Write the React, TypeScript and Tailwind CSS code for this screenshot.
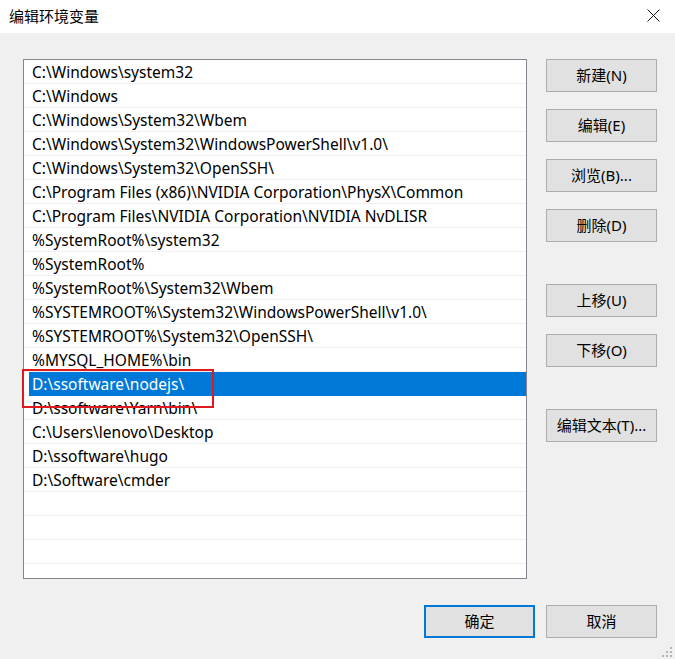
const paths = [
  'C:\\Windows\\system32',
  'C:\\Windows',
  'C:\\Windows\\System32\\Wbem',
  'C:\\Windows\\System32\\WindowsPowerShell\\v1.0\\',
  'C:\\Windows\\System32\\OpenSSH\\',
  'C:\\Program Files (x86)\\NVIDIA Corporation\\PhysX\\Common',
  'C:\\Program Files\\NVIDIA Corporation\\NVIDIA NvDLISR',
  '%SystemRoot%\\system32',
  '%SystemRoot%',
  '%SystemRoot%\\System32\\Wbem',
  '%SYSTEMROOT%\\System32\\WindowsPowerShell\\v1.0\\',
  '%SYSTEMROOT%\\System32\\OpenSSH\\',
  '%MYSQL_HOME%\\bin',
  'D:\\ssoftware\\nodejs\\',
  'D:\\ssoftware\\Yarn\\bin\\',
  'C:\\Users\\lenovo\\Desktop',
  'D:\\ssoftware\\hugo',
  'D:\\Software\\cmder',
  '',
  '',
  '',
  '',
]

const SELECTED = 13

function Button({
  children,
  primary,
}: {
  children: React.ReactNode
  primary?: boolean
}) {
  return (
    <button
      className={
        primary
          ? 'flex h-[33px] w-[111px] items-center justify-center border-2 border-[#0078d7] bg-[#e1e1e1] text-[15px] text-black'
          : 'flex h-[33px] w-[111px] items-center justify-center border border-[#adadad] bg-[#e1e1e1] text-[15px] text-black'
      }
    >
      {children}
    </button>
  )
}

function ResizeGrip() {
  return (
    <svg width="10" height="10" viewBox="0 0 10 10" className="absolute bottom-[2px] right-[3px]">
      <rect x="8" y="0" width="2" height="2" fill="#b5b5b5" />
      <rect x="4" y="4" width="2" height="2" fill="#b5b5b5" />
      <rect x="8" y="4" width="2" height="2" fill="#b5b5b5" />
      <rect x="0" y="8" width="2" height="2" fill="#b5b5b5" />
      <rect x="4" y="8" width="2" height="2" fill="#b5b5b5" />
      <rect x="8" y="8" width="2" height="2" fill="#b5b5b5" />
    </svg>
  )
}

export default function App() {
  return (
    <div
      className="relative flex h-[659px] w-[675px] flex-col overflow-hidden bg-[#f0f0f0] text-black"
      style={{ fontFamily: '"Noto Sans", "Noto Sans CJK SC", sans-serif' }}
    >
      <div className="flex h-[33px] shrink-0 items-center justify-between bg-white pl-[9px] pr-[15px]">
        <span className="text-[15px] leading-none">编辑环境变量</span>
        <svg width="13" height="13" viewBox="0 0 13 13" className="mt-[-3px]">
          <path d="M0.5 0.5 L12.5 12.5 M12.5 0.5 L0.5 12.5" stroke="#111" strokeWidth="1" />
        </svg>
      </div>

      <div className="flex pt-[26px]">
        <div className="relative ml-[23px] h-[520px] w-[504px] overflow-hidden border border-[#828790] bg-white">
          {paths.map((p, i) => (
            <div
              key={i}
              className="relative h-[24px] border-b border-[#f0f0f0]"
            >
              <div
                className={
                  i === SELECTED
                    ? 'ml-[5px] flex h-[24px] items-center bg-[#0078d7] pl-[3px] pt-[2px] text-[15.5px] text-white'
                    : 'ml-[5px] flex h-[23px] items-center pl-[3px] pt-[2px] text-[15.5px]'
                }
              >
                {p}
              </div>
            </div>
          ))}
        </div>

        <div className="ml-[19px] flex flex-col">
          <div className="flex flex-col gap-[17px]">
            <Button>新建(N)</Button>
            <Button>编辑(E)</Button>
            <Button>浏览(B)...</Button>
            <Button>删除(D)</Button>
          </div>
          <div className="mt-[42px] flex flex-col gap-[17px]">
            <Button>上移(U)</Button>
            <Button>下移(O)</Button>
          </div>
          <div className="mt-[42px]">
            <Button>编辑文本(T)...</Button>
          </div>
        </div>
      </div>

      <div className="mt-[26px] flex justify-end gap-[11px] pr-[18px]">
        <Button primary>确定</Button>
        <Button>取消</Button>
      </div>

      <div className="absolute left-[22px] top-[369px] h-[39px] w-[192px] border-2 border-[#e0191f]" />
      <ResizeGrip />
    </div>
  )
}
